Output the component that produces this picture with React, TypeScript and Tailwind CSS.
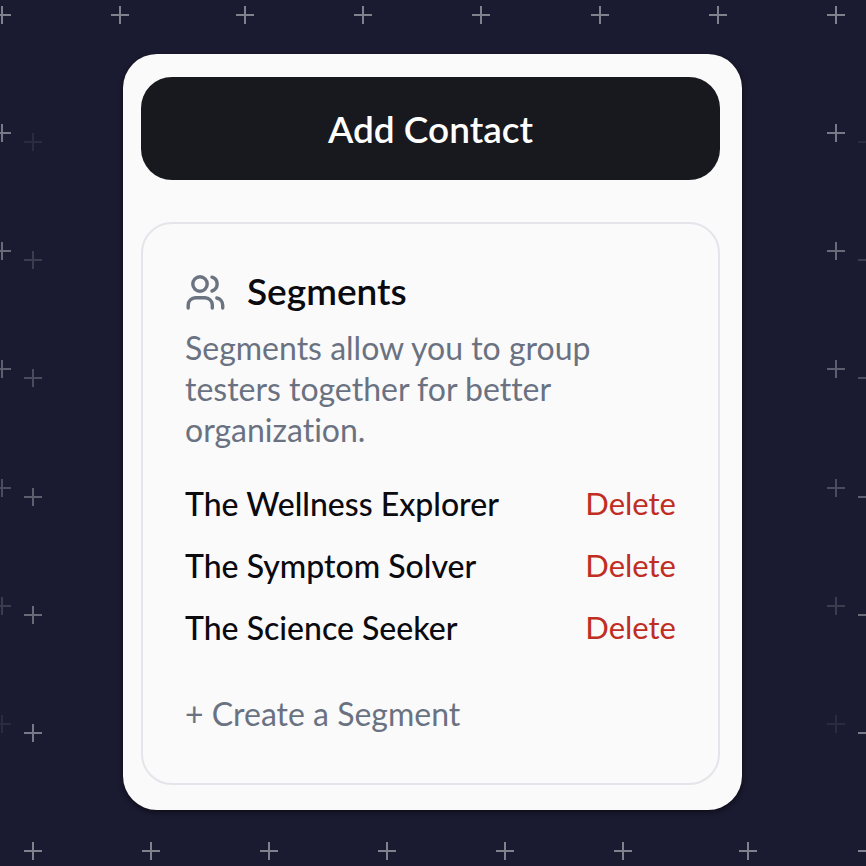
interface Cross {
  x: number;
  y: number;
  opacity: number;
}

const topRow = [2, 120, 245, 363, 481, 600, 718, 836];
const bottomRow = [33, 151, 269, 387, 505, 623, 748, 867];
const fade = [0.5, 0.42, 0.36, 0.26, 0.18, 0.09];

const crosses: Cross[] = [
  ...topRow.map(x => ({ x, y: 15, opacity: 0.55 })),
  ...bottomRow.map(x => ({ x, y: 851, opacity: 0.55 })),
  ...[2, 836].flatMap(x => fade.map((opacity, i) => ({ x, y: 133 + Math.round(i * 118.2), opacity }))),
  ...[33, 867].flatMap(x => fade.map((opacity, i) => ({ x, y: 733 - Math.round(i * 118.2), opacity })))
];

const segments = ['The Wellness Explorer', 'The Symptom Solver', 'The Science Seeker'];

function CrossPattern() {
  return (
    <svg className="absolute inset-0 w-full h-full" viewBox="0 0 866 866" preserveAspectRatio="xMidYMin slice" aria-hidden="true">
      {crosses.map(({ x, y, opacity }) => (
        <path
          key={`${x}-${y}`}
          d={`M${x - 9} ${y}h18M${x} ${y - 9}v18`}
          stroke="#d6d6dc"
          strokeWidth="2"
          opacity={opacity}
        />
      ))}
    </svg>
  );
}

function UsersIcon() {
  return (
    <svg
      width="41"
      height="40"
      viewBox="0 0 41 40"
      fill="none"
      stroke="#6b7280"
      strokeWidth="3.4"
      strokeLinecap="round"
      aria-hidden="true"
    >
      <circle cx="15" cy="13" r="7.2" />
      <path d="M3.2 37v-3a7.3 7.3 0 0 1 7.3-7.3H20a7.3 7.3 0 0 1 7.3 7.3v3" />
      <path d="M27 6.2a7.2 7.2 0 0 1 0 13.8" />
      <path d="M31.8 27a7.4 7.4 0 0 1 5.9 7.2V37" />
    </svg>
  );
}

export default function App() {
  return (
    <div className="relative min-h-screen bg-[#1a1a30] pl-[123px] pr-[124px] py-[54px] overflow-hidden font-['Lato',sans-serif] [font-variant-ligatures:none]">
      <CrossPattern />

      <main className="relative rounded-[34px] bg-[#fafafa] pt-[23px] pb-[25px] pl-[18px] pr-[22px] shadow-[0_2px_5px_rgba(0,0,0,0.5)]">
        <button className="block w-full h-[103px] rounded-[31px] bg-[#18191e] text-white text-[37px] font-semibold">
          Add Contact
        </button>

        {/* Segments */}
        <section className="mt-[42px] rounded-[31px] border-2 border-[#e4e5ea] px-[42px] pt-[44px] pb-[49px]">
          <div className="flex items-center gap-[21px]">
            <UsersIcon />
            <h2 className="text-[37px] leading-[46px] font-semibold text-[#0a0a0f]">Segments</h2>
          </div>
          <p className="mt-[13px] max-w-[420px] text-[32px] leading-[41px] text-gray-500">
            Segments allow you to group testers together for better organization.
          </p>

          <ul className="mt-[33px] flex flex-col gap-[21px]">
            {segments.map(name => (
              <li key={name} className="flex items-center justify-between text-[32px] leading-[41px]">
                <span className="font-medium text-[#0a0a0f]">{name}</span>
                <button className="text-[31px] text-[#c02d22]" aria-label={`Delete ${name}`}>
                  Delete
                </button>
              </li>
            ))}
          </ul>

          <button className="mt-[45px] block text-[32px] leading-[41px] text-gray-500">+ Create a Segment</button>
        </section>
      </main>
    </div>
  );
}
